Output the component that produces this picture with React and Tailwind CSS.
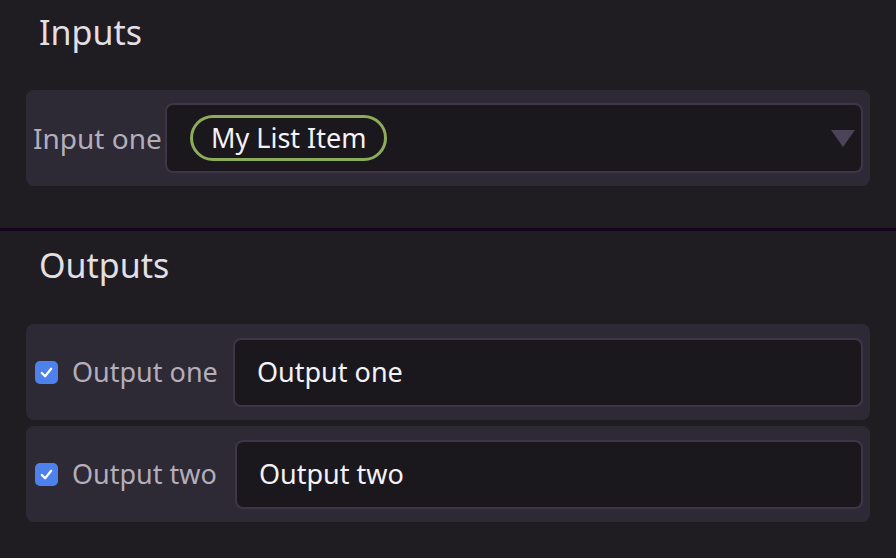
import React from "react";

const font = { fontFamily: '"Noto Sans", "Open Sans", sans-serif' };

const Check = () => (
  <div className="w-[23px] h-[23px] rounded-[5px] bg-[#4d82ec] flex items-center justify-center">
    <svg width="15" height="15" viewBox="0 0 16 16" fill="none">
      <path d="M3 8.5 L6.5 12 L13 4" stroke="white" strokeWidth="2.4" strokeLinecap="round" strokeLinejoin="round" />
    </svg>
  </div>
);

const OutputRow = ({ label, labelWidth, className = "" }) => (
  <div className={`h-[96px] rounded-[8px] bg-[#2d2935] flex items-center pl-[9px] pr-[7px] ${className}`}>
    <Check />
    <div className={`${labelWidth} pl-[14px] text-[27px] text-[#b3aeb9] whitespace-nowrap`}>{label}</div>
    <div className="flex-1 h-[69px] rounded-[8px] border-2 border-[#3e3648] bg-[#1a181d] flex items-center pl-[22px] text-[27px] text-[#f4f2f6]">
      {label}
    </div>
  </div>
);

export default function App() {
  return (
    <div className="w-[896px] h-[558px] bg-[#1f1d22] overflow-hidden" style={font}>
      {/* Inputs */}
      <div className="px-[26px]">
        <div className="h-[64px] flex items-center pl-[13px] text-[34px] text-[#e2dfe5]">Inputs</div>
        <div className="mt-[26px] h-[96px] rounded-[8px] bg-[#2d2935] flex items-center pl-[7px] pr-[7px]">
          <div className="w-[132px] text-[28px] text-[#b3aeb9] whitespace-nowrap">Input one</div>
          <div className="flex-1 h-[70px] rounded-[8px] border-2 border-[#3e3648] bg-[#1a181d] flex items-center pl-[23px] pr-[6px]">
            <div className="h-[46px] rounded-full border-[3px] border-[#8dac5b] flex items-center px-[18px] text-[27px] text-[#f4f2f6]">
              My List Item
            </div>
            <div className="flex-1" />
            <svg width="24" height="17" viewBox="0 0 24 17">
              <path d="M0 0 H24 L12 17 Z" fill="#4b4358" />
            </svg>
          </div>
        </div>
      </div>

      <div className="mt-[42px] h-[3px] bg-[#13051b]" />

      {/* Outputs */}
      <div className="px-[26px]">
        <div className="h-[68px] flex items-center pl-[13px] text-[34px] text-[#e2dfe5]">Outputs</div>
        <OutputRow label="Output one" labelWidth="w-[175px]" className="mt-[25px]" />
        <OutputRow label="Output two" labelWidth="w-[177px]" className="mt-[6px]" />
      </div>
    </div>
  );
}
